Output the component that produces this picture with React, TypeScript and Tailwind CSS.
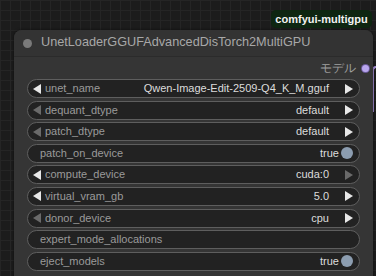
import type { ReactNode } from "react";

type Row =
  | { kind: "combo"; label: string; value: string; left: boolean; right: boolean }
  | { kind: "toggle"; label: string; value: string }
  | { kind: "text"; label: string };

const rows: Row[] = [
  { kind: "combo", label: "unet_name", value: "Qwen-Image-Edit-2509-Q4_K_M.gguf", left: true, right: true },
  { kind: "combo", label: "dequant_dtype", value: "default", left: false, right: true },
  { kind: "combo", label: "patch_dtype", value: "default", left: false, right: true },
  { kind: "toggle", label: "patch_on_device", value: "true" },
  { kind: "combo", label: "compute_device", value: "cuda:0", left: true, right: false },
  { kind: "combo", label: "virtual_vram_gb", value: "5.0", left: true, right: true },
  { kind: "combo", label: "donor_device", value: "cpu", left: false, right: true },
  { kind: "text", label: "expert_mode_allocations" },
  { kind: "toggle", label: "eject_models", value: "true" },
];

const Arrow = ({ dir, on }: { dir: "l" | "r"; on: boolean }) => (
  <svg width="8" height="10" viewBox="0 0 8 10" className="shrink-0">
    <polygon
      points={dir === "l" ? "8,0 8,10 0,5" : "0,0 0,10 8,5"}
      fill={on ? "#e8e8e8" : "#6a6a6a"}
    />
  </svg>
);

const Widget = ({ row }: { row: Row }) => {
  let body: ReactNode;
  if (row.kind === "combo") {
    body = (
      <>
        <Arrow dir="l" on={row.left} />
        <span className="ml-[4px] text-[#9a9a9a]">{row.label}</span>
        <span className="ml-auto text-[#dcdcdc]">{row.value}</span>
        <span className="ml-[16px]">
          <Arrow dir="r" on={row.right} />
        </span>
      </>
    );
  } else if (row.kind === "toggle") {
    body = (
      <>
        <span className="ml-[7px] text-[#9a9a9a]">{row.label}</span>
        <span className="ml-auto text-[#dcdcdc]">{row.value}</span>
        <span className="ml-[2px] h-[12px] w-[12px] rounded-full bg-[#8c9db0]" />
      </>
    );
  } else {
    body = <span className="ml-[7px] text-[#9a9a9a]">{row.label}</span>;
  }

  return (
    <div className="flex h-[19px] items-center rounded-full border border-[#5e5e5e] bg-[#222222] pl-[5px] pr-[6px] text-[11px] leading-none">
      {body}
    </div>
  );
};

export default function App() {
  return (
    <div
      className="relative h-[276px] w-[376px] overflow-hidden bg-[#1c1c1c] bg-[linear-gradient(#252525_1px,transparent_1px),linear-gradient(90deg,#252525_1px,transparent_1px)] bg-[length:10px_10px] font-['Liberation_Sans',Arial,sans-serif]"
    >
      {/* group badge */}
      <div className="absolute left-[271px] top-[10px] flex h-[18px] w-[101px] items-center justify-center rounded-[5px] bg-[#0e2611] text-[11px] font-bold text-[#f2f2f2]">
        comfyui-multigpu
      </div>

      {/* link going out of the output */}
      <div className="absolute left-[372px] top-[66px] h-[46px] w-[4px] rounded-tl-[6px] border-l-2 border-t-2 border-[#a58fd6]" />

      <div className="absolute left-[14px] top-[30px] h-[260px] w-[359px] rounded-[8px] bg-[#353535] shadow-[0_0_3px_rgba(0,0,0,0.6)]">
        <div className="flex h-[27px] items-center rounded-t-[8px] border-b border-[#2b2b2b] bg-[#333333] pl-[9px]">
          <span className="h-[9px] w-[9px] rounded-full bg-[#7a7a7a]" />
          <span className="ml-[9px] text-[12.7px] text-[#a8a8a8]">UnetLoaderGGUFAdvancedDisTorch2MultiGPU</span>
        </div>

        <div className="flex h-[22px] items-center justify-end pr-[4px]">
          <span className="text-[12px] text-[#a0a0a0]">モデル</span>
          <span className="ml-[6px] h-[7px] w-[7px] rounded-full bg-[#b9a6ee] ring-1 ring-[#6a5a99]" />
        </div>

        <div className="ml-[13px] mr-[13px] flex flex-col gap-[2.6px]">
          {rows.map((r) => (
            <Widget key={r.label} row={r} />
          ))}
        </div>
      </div>
    </div>
  );
}
